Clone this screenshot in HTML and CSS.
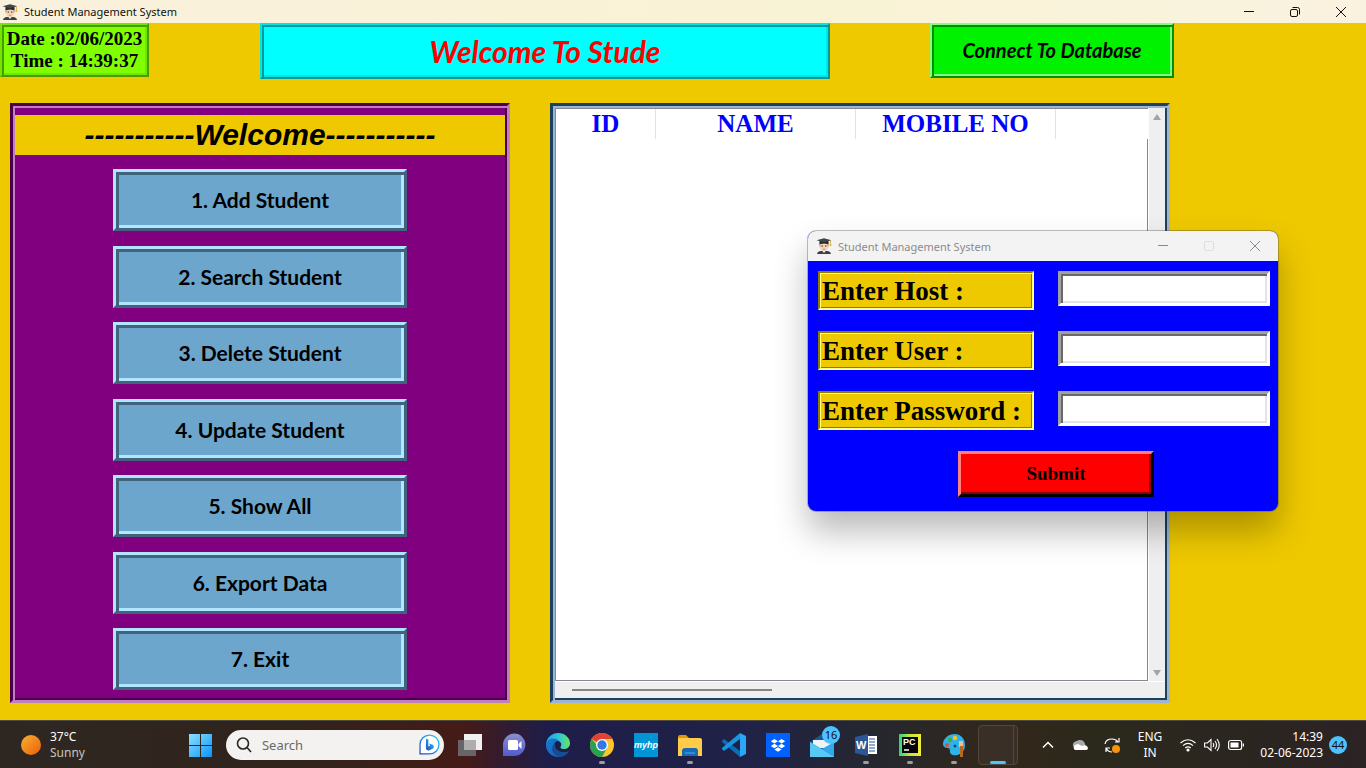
FILE: index.html
```html
<!DOCTYPE html>
<html lang="en">
<head>
<meta charset="utf-8">
<meta name="viewport" content="width=device-width, initial-scale=1">
<title>Student Management System</title>
<link rel="stylesheet" href="styles.css">
</head>
<body>
<svg class="defs" aria-hidden="true">
  <symbol id="student" viewBox="0 0 16 16">
    <path d="M1 16q.4-2.600 4-3h6q3.600.4 4 3z" fill="#3b4146"/>
    <path d="M6 12.500 8 15l2-2.500z" fill="#f4f4f2"/>
    <path d="M3.700 4.500h8.600v3.800H3.700z" fill="#54402f"/>
    <path d="M4.200 6.300q3.800-1.600 7.600 0v3q-.4 4-3.800 4t-3.800-4z" fill="#f5d3b3"/>
    <circle cx="3.900" cy="8.800" r=".8" fill="#f0c8a4"/><circle cx="12.100" cy="8.800" r=".8" fill="#f0c8a4"/>
    <path d="M5.500 7.500h1.400M9.100 7.500h1.400" stroke="#6b5138" stroke-width=".6"/>
    <circle cx="6.200" cy="8.600" r=".5" fill="#33251c"/><circle cx="9.800" cy="8.600" r=".5" fill="#33251c"/>
    <path d="M6.900 11.200q1.100.6 2.200 0" stroke="#ae6755" stroke-width=".6" fill="none"/>
    <path d="M3.500 3h9v3q-4.500-1.400-9 0z" fill="#262a2d"/>
    <path d="M.5 2.200 8 .3l7.500 1.900L8 4.200z" fill="#3f474c"/>
    <path d="M14.500 2.500v3" stroke="#e4a329" stroke-width=".8"/><path d="M14 5h1l.6 3h-2.200z" fill="#f2b434"/>
  </symbol>
  <symbol id="min" viewBox="0 0 12 12"><path d="M1 5.500h10" stroke="currentColor"/></symbol>
  <symbol id="close" viewBox="0 0 12 12"><path d="m1 1 10 10M11 1 1 11" stroke="currentColor"/></symbol>
</svg>

<header class="titlebar main-title">
  <svg class="app-icon"><use href="#student"/></svg>
  <span class="title">Student Management System</span>
  <button class="winbtn" aria-label="Minimize"><svg><use href="#min"/></svg></button>
  <button class="winbtn" aria-label="Restore"><svg viewBox="0 0 12 12" fill="none" stroke="currentColor"><rect x="1.500" y="3.500" width="7" height="7" rx="1.500"/><path d="M3.500 1.500h5a2 2 0 0 1 2 2v5"/></svg></button>
  <button class="winbtn" aria-label="Close"><svg><use href="#close"/></svg></button>
</header>

<main class="desktop">
  <div class="top">
    <div class="clock">Date :02/06/2023<br>Time : 14:39:37</div>
    <h1 class="banner">Welcome To Stude</h1>
    <button class="connect">Connect To Database</button>
  </div>
  <div class="panels">
    <section class="panel menu">
      <h2>-----------Welcome-----------</h2>
      <nav>
        <button>1. Add Student</button>
        <button>2. Search Student</button>
        <button>3. Delete Student</button>
        <button>4. Update Student</button>
        <button>5. Show All</button>
        <button>6. Export Data</button>
        <button>7. Exit</button>
      </nav>
    </section>
    <section class="panel data">
      <div class="sheet">
        <table>
          <thead><tr><th class="id">ID</th><th class="wide">NAME</th><th class="wide">MOBILE NO</th><td></td></tr></thead>
          <tbody></tbody>
        </table>
        <div class="rows"></div>
      </div>
      <div class="vbar">
        <svg viewBox="0 0 8 6"><path d="M4 0 8 6H0z" fill="#a3a3a3"/></svg>
        <svg viewBox="0 0 8 6"><path d="M0 0h8L4 6z" fill="#a3a3a3"/></svg>
      </div>
      <div class="hbar"><div class="thumb"></div></div>
    </section>
  </div>
</main>

<section class="dialog" role="dialog" aria-label="Student Management System">
  <div class="titlebar dialog-title">
    <svg class="app-icon"><use href="#student"/></svg>
    <span class="title">Student Management System</span>
    <button class="winbtn" aria-label="Minimize"><svg><use href="#min"/></svg></button>
    <button class="winbtn" aria-label="Maximize" disabled><svg viewBox="0 0 12 12" fill="none" stroke="currentColor"><rect x="1.500" y="1.500" width="9" height="9" rx="1"/></svg></button>
    <button class="winbtn" aria-label="Close"><svg><use href="#close"/></svg></button>
  </div>
  <form>
    <label for="host">Enter Host :</label><input id="host" type="text">
    <label for="user">Enter User :</label><input id="user" type="text">
    <label for="password">Enter Password :</label><input id="password" type="password">
    <button type="button">Submit</button>
  </form>
</section>

<footer class="taskbar">
  <div class="weather">
    <svg viewBox="0 0 20 20"><defs><linearGradient id="sun" x1="0" y1="0" x2="1" y2="1"><stop stop-color="#f5b42f"/><stop offset="1" stop-color="#ee5b0c"/></linearGradient></defs><circle cx="10" cy="10" r="10" fill="url(#sun)"/></svg>
    <div>37°C<br><span>Sunny</span></div>
  </div>

  <div class="apps">
    <button class="app" aria-label="Start"><svg viewBox="0 0 24 24"><defs><linearGradient id="win" x1="0" y1="0" x2="1" y2="1"><stop stop-color="#8be2fd"/><stop offset="1" stop-color="#0a93fa"/></linearGradient></defs><path d="M1 1h11v11H1zM13 1h11v11H13zM1 13h11v11H1zM13 13h11v11H13z" fill="url(#win)"/></svg></button>
    <div class="search">
      <svg viewBox="0 0 16 16" fill="none" stroke="#252525" stroke-width="1.600"><circle cx="7" cy="6.500" r="5.500"/><path d="m11 10.500 4 4.500"/></svg>
      <input type="text" placeholder="Search" aria-label="Search">
      <svg class="bing" viewBox="0 0 20 20"><defs><linearGradient id="bg" x1="0" y1="1" x2="1" y2="0"><stop stop-color="#2443bd"/><stop offset=".5" stop-color="#218bea"/><stop offset="1" stop-color="#37cfe5"/></linearGradient></defs><path d="M1 19V10a9 9 0 1 1 9 9z" fill="#fff" stroke="url(#bg)" stroke-width="1.200"/><path d="m6.700 4.500 2.200.8v6.500l1.700-.8-.9-2 3.400 1.200q2 1.600.3 3.600L9 16l-2.300-1.500z" fill="url(#bg)"/></svg>
    </div>
    <button class="app" aria-label="Task view"><svg viewBox="0 0 24 24"><path d="M6 1h18v16H6z" fill="#f0f0f0"/><path d="M0 7h18v16H0z" fill="#666"/><path d="M6 7h12v10H6z" fill="#adadad"/></svg></button>
    <button class="app" aria-label="Chat"><svg viewBox="0 0 24 24"><defs><linearGradient id="ch" x1="0" y1="0" x2="0" y2="1"><stop stop-color="#8b8eca"/><stop offset="1" stop-color="#515bd0"/></linearGradient></defs><path d="M1 23V12A11.200 11.200 0 1 1 12 23z" fill="url(#ch)"/><rect x="6" y="7" width="10" height="10" rx="1.500" fill="#fff"/><path d="m16.500 11 3-3v8l-3-3z" fill="#fff"/></svg></button>
    <button class="app" aria-label="Edge"><svg viewBox="0 0 24 24"><defs><linearGradient id="e1"><stop stop-color="#249ce8"/><stop offset=".55" stop-color="#2fc8d5"/><stop offset="1" stop-color="#6be35c"/></linearGradient><linearGradient id="e2" x1="0" y1="0" x2="1" y2="1"><stop stop-color="#1878cf"/><stop offset="1" stop-color="#1562b8"/></linearGradient></defs><path d="M0 11C1 4 6 0 12 0c7 0 12 5 12 10 0 4-3 6-6 6-4 0-4-2-3-3 1-3-1-5-4-5-5 0-7 4-10 8z" fill="url(#e1)"/><path d="M0 11C2 5 9 4 13 8c-5-1-8 7-1 11 3 2 7 2 11-1-3 4-7 6-11 6C5 24-.5 18 0 11z" fill="url(#e2)"/><path d="M9 10c-5 4-3 12 4 14 4 0 8-2 10-6-4 2-15 2-14-8z" fill="#164c95"/></svg></button>
    <button class="app open" aria-label="Chrome"><svg viewBox="0 0 24 24"><circle cx="12" cy="12" r="12" fill="#fbc52e"/><path d="M12 12 1.600 6A12 12 0 0 1 22.400 6H12z" fill="#e34133"/><path d="M1.600 6A12 12 0 0 0 12 24l5-9-5 3z" fill="#28a150"/><circle cx="12" cy="12" r="6" fill="#fff"/><circle cx="12" cy="12" r="4.700" fill="#3179e6"/></svg></button>
    <button class="app" aria-label="myHP"><span class="hp">myhp</span></button>
    <button class="app open" aria-label="File Explorer"><svg viewBox="0 0 24 24"><path d="M0 4q0-2 2-2h6l3 3H0z" fill="#dd980e"/><path d="M0 5h22q2 0 2 2v16H0z" fill="#ffcb48"/><path d="M4 23v-5q0-3 3-3h10q3 0 3 3v5z" fill="#166bb5"/><path d="M7 19h10v2H7z" fill="#318dd0"/></svg></button>
    <button class="app" aria-label="Visual Studio Code"><svg viewBox="0 0 24 24"><path d="m0 8 2-2 16 12v6L0 9z" fill="#086eb8"/><path d="m0 16 2 2L18 6V0L0 15z" fill="#1994df"/><path d="M18 0 24 3v18l-6 3z" fill="#2aa7f5"/></svg></button>
    <button class="app" aria-label="Dropbox"><svg viewBox="0 0 24 24"><path d="M0 0h24v24H0z" fill="#0061fe"/><path d="m8.400 6 3.600 2.300-3.600 2.300L4.800 8.300zm7.200 0 3.600 2.300-3.600 2.300L12 8.300zM8.400 10.700l3.600 2.300-3.600 2.300L4.800 13zm7.200 0 3.600 2.300-3.600 2.300L12 13zM12 14.200l3.600 2.300-3.600 2.300-3.600-2.300z" fill="#fff"/></svg></button>
    <button class="app" aria-label="Mail"><svg viewBox="0 0 24 24"><path d="M0 9 12 1l12 8v14H0z" fill="#175992"/><path d="M3 7h18v8H3z" fill="#f0f3f5"/><path d="m0 9 12 7 12-7v15H0z" fill="#31a8ea"/><path d="M0 24V9l24 15z" fill="#58c8f5"/></svg><span class="badge count">16</span></button>
    <button class="app open" aria-label="Word"><svg viewBox="0 0 24 24"><path d="M12 3h11v18H12z" fill="#fff"/><path d="M15 6h6M15 9h6M15 12h6M15 15h6M15 18h6" stroke="#2b579a"/><path d="M1 4 14 1v22L1 20z" fill="#2b579a"/><text x="2" y="16" class="glyph" fill="#fff">W</text></svg></button>
    <button class="app open" aria-label="PyCharm"><svg viewBox="0 0 24 24"><defs><linearGradient id="py"><stop stop-color="#22d48c"/><stop offset=".45" stop-color="#b9e63b"/><stop offset="1" stop-color="#f2ed3d"/></linearGradient></defs><path d="M1 1h22v22H1z" fill="url(#py)"/><path d="M4 4h16v16H4z" fill="#050505"/><text x="5" y="12" class="glyph small" fill="#fff">PC</text><path d="M6 17h5" stroke="#fff" stroke-width="1.500"/></svg></button>
    <button class="app open" aria-label="Paint"><svg viewBox="0 0 24 24"><path d="M13 1C6 1 1 6 1 11c0 3 3 4 5 4 3 0 1 4 3 6 3 3 14 1 14-9 0-7-5-11-10-11z" fill="#2fb2e8"/><circle cx="5" cy="12" r="2" fill="#e05238"/><circle cx="8" cy="7" r="2.200" fill="#4aa935"/><circle cx="13" cy="5" r="2.200" fill="#f4c22e"/><circle cx="13" cy="13" r="1.500" fill="#154b79"/><path d="M17 8h4v6h-4z" fill="#e9c293"/><path d="M18 13h3v11h-3z" fill="#b96822"/></svg></button>
    <button class="app active" aria-label="Student Management System"></button>
  </div>

  <div class="tray">
    <button aria-label="Show hidden icons"><svg viewBox="0 0 16 16" fill="none" stroke="#fff" stroke-width="1.500"><path d="m3 10.500 5-5 5 5"/></svg></button>
    <button aria-label="OneDrive"><svg viewBox="0 0 16 16"><path d="M1 9a4 4 0 0 1 4-5 5 5 0 0 1 8 3l1 3H2z" fill="#a9a9a9"/><path d="M3 13a3 3 0 0 1 0-5l3-1 4 2q5-2 6 2 0 2-2 2z" fill="#fff"/></svg></button>
    <button aria-label="Update"><svg viewBox="0 0 16 16" fill="none" stroke="#fff" stroke-width="1.200"><path d="M1 7q1-5 7-5 4 0 6 3M15 1v4h-4M2 15v-4h4M2 11q2 4 6 4"/><circle cx="12" cy="12" r="4" fill="#f7940b" stroke="none"/></svg></button>
    <button class="lang">ENG<br>IN</button>
    <button class="status" aria-label="Network, volume and battery">
      <svg viewBox="0 0 16 16" fill="none" stroke="#fff" stroke-width="1.200"><path d="M.5 6q7.500-6.500 15 0M3 8.600q5-4.400 10 0M5.300 11q2.700-2.300 5.400 0"/><circle cx="8" cy="13" r="1" fill="#fff"/></svg>
      <svg viewBox="0 0 16 16" fill="none" stroke="#fff" stroke-width="1.100"><path d="M.6 6h2.800L7 2.500v11L3.400 10H.6zM9 6q1.500 2 0 4M11 4q3 4 0 8M13 2q4.500 6 0 12"/></svg>
      <svg viewBox="0 0 16 16" fill="none" stroke="#fff" stroke-width="1.200"><rect x=".6" y="3.500" width="13" height="9" rx="2"/><path d="M15.400 6.500v3"/><rect x="2.500" y="5.500" width="8" height="5" fill="#fff" stroke="none"/></svg>
    </button>
    <button class="time">14:39<br>02-06-2023</button>
    <span class="badge">44</span>
  </div>
</footer>
</body>
</html>
```
FILE: styles.css
```css
* { box-sizing: border-box; }

body {
  margin: 0;
  position: relative;
  min-height: 100vh;
  display: flex;
  flex-direction: column;
  background: #eec900;
  font-family: "Segoe UI", "Noto Sans", sans-serif;
  font-size: 12px;
}

button {
  border: 0;
  padding: 0;
  background: none;
  color: inherit;
  font: inherit;
}

.defs { position: absolute; width: 0; height: 0; }

/* Window title bars */
.titlebar {
  display: flex;
  align-items: center;
  color: #111;
}
.main-title {
  height: 23px;
  padding: 0 2px;
  background: linear-gradient(90deg, #f9f1dc, #f9f3d5 60%, #faf2e0);
}
.app-icon { width: 16px; height: 16px; }
.title { margin: 0 auto 0 6px; font-size: 11px; }
.winbtn {
  display: grid;
  place-items: center;
  width: 46px;
  height: 20px;
}
.winbtn svg { width: 12px; height: 12px; }

/* Main window */
.desktop {
  flex: 1;
  display: flex;
  flex-direction: column;
  gap: 24px;
  padding-bottom: 17px;
}
.top {
  display: flex;
  align-items: flex-start;
  height: 56px;
  padding-right: 192px;
}
.clock, .banner, .connect {
  border: 2px solid;
  text-align: center;
}
.clock {
  width: 149px;
  padding: 3px 0;
  margin-right: 111px;
  border-color: #72e600 #4c9900 #4c9900 #72e600;
  box-shadow: inset 2px 2px #4c9900, inset -2px -2px #72e600;
  background: #7fff00;
  color: #000;
  font: bold 19px/22px "Liberation Serif", serif;
}
.banner {
  flex: 1;
  margin: 0 100px 0 0;
  border-color: #00e6e6 #009999 #009999 #00e6e6;
  box-shadow: inset 2px 2px #009999, inset -2px -2px #00e6e6;
  background: #0ff;
  color: #f00;
  font: italic bold 30px/52px Chiller, Lato, sans-serif;
}
.connect {
  width: 244px;
  border-color: #80ff80 #009100 #009100 #80ff80;
  box-shadow: inset 2px 2px #009100, inset -2px -2px #80ff80;
  background: #00f200;
  color: #000;
  font: italic bold 20px/51px Chiller, Lato, sans-serif;
}

.panels {
  flex: 1;
  display: grid;
  grid-template-columns: 500fr 620fr;
  gap: 40px;
  padding: 0 196px 0 10px;
}
.panel { border: 3px solid; }

.menu {
  display: flex;
  flex-direction: column;
  padding: 9px 2px 10px;
  border-color: #4b004b #c07fc0 #c07fc0 #4b004b;
  box-shadow: inset 2px 2px #c07fc0, inset -2px -2px #4b004b;
  background: #800080;
}
.menu h2 {
  margin: 0;
  background: #eec900;
  color: #000;
  text-align: center;
  font: italic bold 30px/40px "Liberation Sans", Arial, sans-serif;
}
.menu nav {
  flex: 1;
  display: flex;
  flex-direction: column;
  justify-content: space-between;
  align-items: center;
  padding-top: 14px;
}
.menu nav button {
  width: 60%;
  height: 62px;
  border: 3px solid;
  border-color: #b0e6ff #41647c #41647c #b0e6ff;
  box-shadow: inset 3px 3px #41647c, inset -3px -3px #b0e6ff;
  background: #6ca6cd;
  color: #000;
  font: bold 21px/50px Chiller, Lato, sans-serif;
}

.data {
  display: grid;
  grid-template-columns: 1fr 17px;
  grid-template-rows: 1fr 17px;
  padding: 2px;
  border-color: #1c405e #9cb5d4 #9cb5d4 #1c405e;
  box-shadow: inset 2px 2px #9cb5d4, inset -2px -2px #1c405e;
  background: #efefef;
}
.sheet {
  display: flex;
  flex-direction: column;
  border-top: 1px solid #828790;
  border-left: 1px solid #828790;
  background: #fff;
}
.sheet table {
  width: 100%;
  table-layout: fixed;
  border-spacing: 0;
}
.sheet th {
  height: 30px;
  padding: 0;
  border-right: 1px solid #e2e2e2;
  color: #00f;
  font: bold 25px/30px Algerian, "Liberation Serif", serif;
}
.id { width: 100px; }
.wide { width: 200px; }
.rows {
  flex: 1;
  border-right: 1px solid #828790;
  border-bottom: 1px solid #828790;
}
.vbar {
  display: flex;
  flex-direction: column;
  justify-content: space-between;
  align-items: center;
  padding: 6px 0 5px;
  border-left: 1px solid #fff;
}
.vbar svg { width: 8px; height: 6px; }
.hbar {
  grid-column: 1 / 3;
  padding: 7px 17px;
  border-top: 1px solid #fff;
}
.thumb { width: 200px; height: 2px; background: #858585; }

/* Database dialog */
.dialog {
  position: absolute;
  left: 808px;
  top: 231px;
  width: 470px;
  overflow: hidden;
  border-radius: 8px;
  background: #00f;
  box-shadow: 0 0 0 1px rgba(70, 70, 70, .35), 0 20px 34px rgba(0, 0, 0, .28);
}
.dialog-title {
  height: 30px;
  padding-left: 8px;
  background: #f3f3f3;
  color: #8b8b8b;
}
.winbtn:disabled { color: #ddd; }
.dialog form {
  display: grid;
  grid-template-columns: 216px 1fr;
  gap: 21px 24px;
  align-items: start;
  padding: 10px 8px 14px 10px;
}
.dialog label {
  height: 39px;
  padding-left: 2px;
  border: 2px solid;
  border-color: #8f7900 #ffff80 #ffff80 #8f7900;
  box-shadow: inset 1px 1px #ffff80, inset -1px -1px #8f7900;
  background: #eec900;
  color: #000;
  font: bold 27px/37px "Liberation Serif", serif;
}
.dialog input {
  width: 100%;
  height: 35px;
  padding: 0 6px;
  border: 3px solid;
  border-color: #a0a0a0 #fff #fff #a0a0a0;
  border-radius: 0;
  outline: 0;
  box-shadow: inset 2px 2px #696969, inset -2px -2px #e3e3e3;
  background: #fff;
  font: 20px "Liberation Serif", serif;
}
.dialog form button {
  grid-column: 1 / 3;
  width: 196px;
  height: 46px;
  margin-left: 140px;
  border: 3px solid;
  border-color: #ff8080 #000 #000 #ff8080;
  box-shadow: inset -2px -2px #900000;
  background: #f00;
  color: #000;
  font: bold 19px "Liberation Serif", serif;
}

/* Taskbar */
.taskbar {
  display: flex;
  align-items: center;
  height: 48px;
  padding: 0 19px 0 21px;
  border-top: 1px solid #4e4a46;
  background: linear-gradient(90deg, #2e2721, #30241c 22%, #451b17 34%, #1e1d49 40%, #202247 55%, #25272f 64%, #33271a 73%, #2b291c 80%, #2b2324);
  color: #fff;
  line-height: 16px;
}
.weather { display: flex; align-items: center; gap: 9px; }
.weather svg { width: 20px; height: 20px; }
.weather span { color: #c8c4c0; }
.apps {
  display: flex;
  align-items: center;
  gap: 4px;
  margin: 0 auto 0 95px;
}
.app {
  position: relative;
  display: grid;
  place-items: center;
  width: 40px;
  height: 40px;
}
.app svg { width: 24px; height: 24px; }
.open::after, .active::after {
  content: "";
  position: absolute;
  left: 17px;
  bottom: 1px;
  width: 6px;
  height: 3px;
  border-radius: 2px;
  background: #9d9d9d;
}
.active {
  border: 1px solid #51463d;
  border-radius: 4px;
  background: #3a2f27;
}
.active::before {
  content: "";
  position: absolute;
  top: 0;
  right: 3px;
  bottom: 0;
  border-right: 1px solid #51463d;
}
.active::after { left: 11px; bottom: 0; width: 16px; background: #4cc2ff; }
.hp {
  width: 24px;
  background: #0096d6;
  font: italic bold 9px/24px "Liberation Sans", sans-serif;
}
.glyph { font: bold 11px "Liberation Sans", sans-serif; }
.small { font-size: 9px; }
.search {
  display: flex;
  align-items: center;
  gap: 10px;
  width: 218px;
  height: 30px;
  margin: 0 2px;
  padding: 0 4px 0 10px;
  border-radius: 15px;
  background: #f3f2f0;
}
.search svg { flex: none; width: 16px; height: 16px; }
.search .bing { width: 21px; height: 21px; }
.search input {
  flex: 1;
  min-width: 0;
  padding: 0;
  border: 0;
  outline: 0;
  background: none;
  font: 13px "Segoe UI", "Noto Sans", sans-serif;
}
.search input::placeholder { color: #696969; opacity: 1; }
.badge {
  display: grid;
  place-items: center;
  width: 18px;
  height: 18px;
  border-radius: 9px;
  background: #4cc2ff;
  color: #111;
  font-size: 11px;
}
.count {
  position: absolute;
  top: 1px;
  right: 2px;
}
.tray { display: flex; align-items: center; gap: 16px; }
.tray svg { display: block; width: 16px; height: 16px; }
.lang { margin: 0 2px; text-align: center; }
.status { display: flex; gap: 8px; }
.time { text-align: right; }
.time + .badge { margin-left: -10px; }
```
